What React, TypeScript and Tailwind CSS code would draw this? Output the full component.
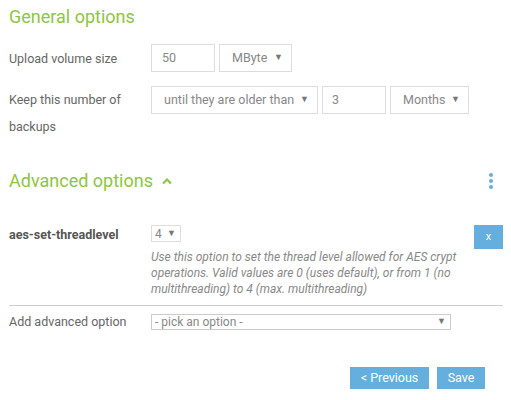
import React from "react";

const Caret = () => (
  <span className="text-[9px] text-[#777]">▼</span>
);

export default function App() {
  return (
    <div className="w-[511px] h-[400px] bg-white pl-[9px] pr-[8px] text-[#666]" style={{ fontFamily: 'Roboto, "Open Sans", sans-serif' }}>
      <h2 className="pt-[6px] text-[18px] leading-[22px] text-[#8dc63f]">General options</h2>

      <div className="mt-[16px] flex">
        <div className="w-[142px] text-[12.5px] leading-[27px] pt-[1px]">Upload volume size</div>
        <div className="flex gap-[4px]">
          <div className="w-[64px] h-[28px] border border-[#ddd] px-[10px] flex items-center text-[12.5px] text-[#888]">50</div>
          <div className="w-[73px] h-[28px] border border-[#ddd] pl-[12px] pr-[8px] flex items-center justify-between text-[12.5px] text-[#888]">MByte <Caret /></div>
        </div>
      </div>

      <div className="mt-[14px] flex">
        <div className="w-[142px] text-[12.5px] leading-[27px]">Keep this number of<br />backups</div>
        <div className="flex gap-[4px] items-start">
          <div className="w-[167px] h-[28px] border border-[#ddd] pl-[12px] pr-[8px] flex items-center justify-between text-[12.5px] text-[#888] whitespace-nowrap">until they are older than <Caret /></div>
          <div className="w-[64px] h-[28px] border border-[#ddd] px-[9px] flex items-center text-[12.5px] text-[#888]">3</div>
          <div className="w-[79px] h-[28px] border border-[#ddd] pl-[12px] pr-[8px] flex items-center justify-between text-[12.5px] text-[#888]">Months <Caret /></div>
        </div>
      </div>

      <div className="mt-[30px] flex items-center justify-between">
        <h2 className="text-[18px] leading-[22px] text-[#8dc63f] flex items-center">
          Advanced options
          <svg className="ml-[9px]" width="10" height="8" viewBox="0 0 10 8"><path d="M1 6.5 L5 2.5 L9 6.5" stroke="#8dc63f" strokeWidth="2.2" fill="none" /></svg>
        </h2>
        <div className="flex flex-col gap-[2px] mr-[10px]">
          <span className="w-[4px] h-[4px] rounded-full bg-[#64afdd]" />
          <span className="w-[4px] h-[4px] rounded-full bg-[#64afdd]" />
          <span className="w-[4px] h-[4px] rounded-full bg-[#64afdd]" />
        </div>
      </div>

      <div className="mt-[33px] flex">
        <div className="w-[142px] text-[12.5px] font-bold text-[#555] leading-[18px] pt-[1px]">aes-set-threadlevel</div>
        <div className="flex-1">
          <div className="w-[30px] h-[17px] border border-[#ddd] pl-[3px] pr-[4px] flex items-center justify-between text-[12px] text-[#888]">4 <Caret /></div>
          <p className="mt-[7px] italic text-[12px] leading-[16px] text-[#888] w-[320px]">Use this option to set the thread level allowed for AES crypt operations. Valid values are 0 (uses default), or from 1 (no multithreading) to 4 (max. multithreading)</p>
        </div>
        <button className="w-[29px] h-[24px] bg-[#64afdd] text-white text-[11px] flex items-center justify-center">x</button>
      </div>

      <div className="mt-[8px] border-t border-[#ccc]" />

      <div className="mt-[8px] flex items-center">
        <div className="w-[142px] text-[12.5px] leading-[16px]">Add advanced option</div>
        <div className="w-[300px] h-[16px] border border-[#ccc] pl-[3px] pr-[4px] flex items-center justify-between text-[12px] text-[#888]">- pick an option - <Caret /></div>
      </div>

      <div className="mt-[37px] flex justify-end gap-[8px] pr-[18px]">
        <button className="w-[79px] h-[22px] bg-[#64afdd] text-white text-[12.5px]">&lt; Previous</button>
        <button className="w-[48px] h-[22px] bg-[#64afdd] text-white text-[12.5px]">Save</button>
      </div>
    </div>
  );
}
